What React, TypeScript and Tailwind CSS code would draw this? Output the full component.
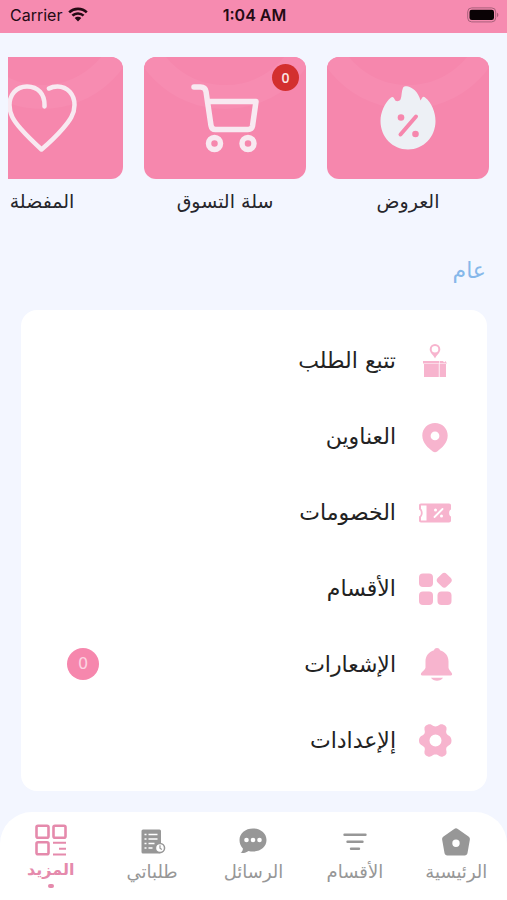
import type { ReactNode } from "react";

const ARABIC_FONT = "font-['DejaVu_Sans',sans-serif]";

function WifiIcon() {
  return (
    <svg className="h-4 w-5" viewBox="0 0 20 16" fill="currentColor">
      <path d="M10 .6C6.200.6 2.800 2 .3 4.400l1.800 1.900A11.300 11.300 0 0 1 10 3.200c3 0 5.800 1.100 7.900 3.100l1.800-1.900C17.200 2 13.800.6 10 .6z" />
      <path d="M10 5.200c-2.500 0-4.800.9-6.500 2.500l1.900 1.900A6.700 6.700 0 0 1 10 7.800c1.800 0 3.400.7 4.600 1.800l1.900-1.900A9.500 9.500 0 0 0 10 5.200z" />
      <path d="M10 9.700c-1.300 0-2.500.5-3.300 1.300L10 14.600l3.300-3.600A4.700 4.700 0 0 0 10 9.700z" />
    </svg>
  );
}

function BatteryIcon() {
  return (
    <svg className="h-4 w-8" viewBox="0 0 32 16">
      <rect x=".7" y=".9" width="28" height="14" rx="4" fill="none" stroke="#a8607a" />
      <rect x="2.500" y="2.700" width="24.500" height="10.400" rx="2.300" fill="#0a0205" />
      <path d="M30.300 5.800v4.400c1.300-.6 1.300-3.800 0-4.400z" fill="#8f4a62" />
    </svg>
  );
}

function FireIcon() {
  return (
    <svg className="h-16 w-14" viewBox="0 0 56 64">
      <path
        d="M20.500 13.500c1.500-3.500.8-8 2.500-11.800C23.800.3 25.500 0 27 .2c5.500.8 11.500 6 13.500 14.300l1.800-3c.8-1 1.900-1 2.800 0C51.500 16.500 55.500 26 55.500 35c0 16-12 28.500-27.500 28.500S.5 51 .5 35C.5 26 5 16.500 11 11.500c.9-.8 2-.7 2.700.2l1.800 3c1.500.8 3.800.6 5-1.200z"
        fill="#edf0f5"
      />
      <path d="M20.500 48.500 36 30.500" stroke="#f687ad" strokeWidth="4" strokeLinecap="round" />
      <circle cx="21" cy="31.500" r="3.300" fill="#f687ad" />
      <circle cx="35.500" cy="48" r="3.300" fill="#f687ad" />
    </svg>
  );
}

function CartIcon() {
  return (
    <svg
      className="h-[70px] w-[70px]"
      viewBox="0 0 70 70"
      fill="none"
      stroke="#f8e9f1"
      strokeWidth="5.500"
      strokeLinecap="round"
      strokeLinejoin="round"
    >
      <path d="M4 4h6.500c3.500 0 5 1.500 5.500 4.500l5 34c.5 3 2 4 4.500 4h32.500c2.500 0 4-1 4.500-3.500l3.500-24.500H17.500" />
      <circle cx="24.500" cy="60.500" r="6" />
      <circle cx="58" cy="60.500" r="6" />
    </svg>
  );
}

function HeartIcon() {
  return (
    <svg
      className="h-[70px] w-[70px]"
      viewBox="0 0 70 70"
      fill="none"
      stroke="#f8e9f1"
      strokeWidth="4.500"
      strokeLinecap="round"
      strokeLinejoin="round"
    >
      <path d="M37.500 23.500C38 11 31 3.500 20 3.500 9 3.500 2.500 12 2.500 22c0 9 4 15.500 11.500 24C20.500 53.500 28 60.500 34.500 66.500c7-6 14.500-13 21-20.500C63 37.500 67.500 31 67.500 22c0-10.500-7-18.500-17-18.500-3.500 0-6 .5-8.500 2" />
    </svg>
  );
}

function TrackIcon() {
  return (
    <svg className="h-9 w-9" viewBox="0 0 36 36" fill="#f7b4ce">
      <path
        fillRule="evenodd"
        d="M18 2a5.300 5.300 0 0 0-5.300 5.300C12.700 10.800 16 12.500 18 16.500c2-4 5.300-5.700 5.300-9.200A5.300 5.300 0 0 0 18 2zm0 2a3.300 3.300 0 1 1 0 6.600A3.300 3.300 0 0 1 18 4z"
      />
      <path d="M6 19h16v2.500H6zM7 22h14.800v13H7zM22.600 19h3.400l1.200 1.500L28.400 19l1.600 2.500h-7.400zM22.600 22H29v13h-6.400z" />
    </svg>
  );
}

function PinIcon() {
  return (
    <svg className="h-9 w-9" viewBox="0 0 36 36" fill="#f7b4ce">
      <path
        fillRule="evenodd"
        d="M18 5C11 5 5.300 10.300 5.300 17.500c0 7.500 6 12.500 10.500 16 1.500 1.100 2.900 1.100 4.400 0 4.500-3.500 10.500-8.500 10.500-16C30.700 10.300 25 5 18 5zm0 8.500a4.400 4.400 0 1 1 0 8.800 4.400 4.400 0 0 1 0-8.800z"
      />
    </svg>
  );
}

function TicketIcon() {
  return (
    <svg className="h-9 w-9" viewBox="0 0 36 36">
      <path
        d="M4 9.500h28c1.300 0 2 .7 2 2v4c-2.500.7-2.500 6.300 0 7v4c0 1.300-.7 2-2 2H4c-1.300 0-2-.7-2-2v-4c2.500-.7 2.500-6.300 0-7v-4c0-1.300.7-2 2-2z"
        fill="#f7b4ce"
      />
      <path d="M4 11.500h5.500v15H4v-3.300c2.200-2 2.200-6.400 0-8.400z" fill="#fff" />
      <path d="m17.500 23 8-8" stroke="#fff" strokeWidth="1.800" strokeLinecap="round" />
      <circle cx="18.500" cy="16" r="1.500" fill="#fff" />
      <circle cx="24.500" cy="22" r="1.500" fill="#fff" />
    </svg>
  );
}

function CategoriesIcon() {
  return (
    <svg className="h-9 w-9" viewBox="0 0 36 36" fill="#f7b4ce">
      <rect x="2" y="3.500" width="14" height="13.500" rx="4" />
      <rect x="21" y="4" width="12.500" height="12.500" rx="3.500" transform="rotate(45 27.250 10.250)" />
      <rect x="2" y="21.500" width="14" height="13.500" rx="4" />
      <rect x="20.500" y="21.500" width="14" height="13.500" rx="4" />
    </svg>
  );
}

function BellIcon() {
  return (
    <svg className="h-9 w-9" viewBox="0 0 36 36" fill="#f7b4ce">
      <path d="M20 2c1.500 0 2.600.8 3 2.200 5.500 1.600 8.500 6 8.500 11.300v6c0 2 3 4.500 3.500 6 .4 1.300-.2 2-1.300 2H5.300c-1.200 0-1.700-.8-1.300-2 .5-1.500 4.500-4 4.500-6v-6c0-5.300 3-9.700 8.500-11.300.4-1.400 1.500-2.200 3-2.200z" />
      <path d="M14 31.800h12c-1.200 2-3.500 2.900-6 2.900s-4.800-.9-6-2.900z" />
    </svg>
  );
}

function GearIcon() {
  return (
    <svg className="h-9 w-9" viewBox="0 0 36 36" fill="#f7b4ce">
      <path
        fillRule="evenodd"
        d="M12.500 2.300c2.500 0 3 2.200 6 2.200s3.500-2.200 6-2.200c2 0 4.700 1.700 5 3.500.4 2.500-1 3.500 0 5.600 1.200 2.500 5 2 5 7.100s-3.800 4.600-5 7.100c-1 2.100.4 3.100 0 5.600-.3 1.800-3 3.500-5 3.500-2.500 0-3-2.200-6-2.200s-3.500 2.200-6 2.200c-2 0-4.700-1.700-5-3.500-.4-2.500 1-3.500 0-5.600-1.200-2.500-5.500-2-5.500-7.100s4.300-4.600 5.500-7.100c1-2.100-.4-3.100 0-5.600.3-1.800 3-3.500 5-3.500zm6 10.200a6 6 0 1 0 0 12 6 6 0 0 0 0-12z"
      />
    </svg>
  );
}

function HomeIcon() {
  return (
    <svg className="h-8 w-8" viewBox="0 0 32 32" fill="#979797">
      <path
        fillRule="evenodd"
        d="M14.200 2.900c1.200-.9 2.400-.9 3.600 0l10.700 7.700c1.200.9 1.600 2 1.300 3.400l-2.300 13c-.3 1.500-1.300 2.400-2.900 2.400H7.400c-1.600 0-2.600-.9-2.900-2.400L2.200 14c-.3-1.400.1-2.500 1.300-3.400zM16 13.500a3.700 3.700 0 1 0 0 7.400 3.700 3.700 0 0 0 0-7.400z"
      />
    </svg>
  );
}

function FilterIcon() {
  return (
    <svg className="h-8 w-8" viewBox="0 0 32 32" stroke="#979797" strokeWidth="2.400" strokeLinecap="round">
      <path d="M5.500 8.800h21M8.500 15.800h15M12 22.800h8" />
    </svg>
  );
}

function ChatIcon() {
  return (
    <svg className="h-8 w-8" viewBox="0 0 32 32">
      <path
        d="M16 2.500c7.700 0 13.500 4.900 13.500 11.500S23.700 25.500 16 25.500c-1.600 0-3.100-.2-4.500-.6-2 1.600-5 2.400-8 1.900 1.700-1.200 2.500-2.800 2.400-4.300C3.800 20.300 2.500 17.300 2.500 14 2.500 7.400 8.300 2.500 16 2.500z"
        fill="#979797"
      />
      <circle cx="9.500" cy="14" r="2.300" fill="#fff" />
      <circle cx="16" cy="14" r="2.300" fill="#fff" />
      <circle cx="22.500" cy="14" r="2.300" fill="#fff" />
    </svg>
  );
}

function OrdersIcon() {
  return (
    <svg className="h-8 w-8" viewBox="0 0 32 32">
      <rect x="5.500" y="3.500" width="19.500" height="24" rx="1.500" fill="#979797" />
      <path
        d="M8.500 8.500h2M12.500 8.500h9M8.500 13h2M12.500 13h9M8.500 17.500h2M12.500 17.500h6M8.500 22h2M12.500 22h4"
        stroke="#fff"
        strokeWidth="1.400"
      />
      <circle cx="24" cy="22" r="5.300" fill="#979797" />
      <circle cx="24" cy="22" r="3.800" fill="#fff" />
      <path d="M24 19.300v3l1.800 1.300" stroke="#979797" strokeWidth="1.200" fill="none" />
    </svg>
  );
}

function MoreIcon() {
  return (
    <svg className="h-8 w-8" viewBox="0 0 32 32" fill="none" stroke="#e58aac" strokeWidth="2.600">
      <rect x="1.500" y="1.800" width="12" height="12" rx="1.500" />
      <rect x="18.500" y="1.800" width="12" height="12" rx="1.500" />
      <rect x="1.500" y="18.300" width="12" height="12" rx="1.500" />
      <path d="M18 18.800h13M24 24.800h7M18 30.500h13" strokeWidth="2" />
    </svg>
  );
}

type Shortcut = { label: string; icon: ReactNode; badge?: number };

const SHORTCUTS: Shortcut[] = [
  { label: "العروض", icon: <FireIcon /> },
  { label: "سلة التسوق", icon: <CartIcon />, badge: 0 },
  { label: "المفضلة", icon: <HeartIcon /> },
];

const MENU: Shortcut[] = [
  { label: "تتبع الطلب", icon: <TrackIcon /> },
  { label: "العناوين", icon: <PinIcon /> },
  { label: "الخصومات", icon: <TicketIcon /> },
  { label: "الأقسام", icon: <CategoriesIcon /> },
  { label: "الإشعارات", icon: <BellIcon />, badge: 0 },
  { label: "إلإعدادات", icon: <GearIcon /> },
];

const TABS = [
  { label: "الرئيسية", icon: <HomeIcon />, active: false },
  { label: "الأقسام", icon: <FilterIcon />, active: false },
  { label: "الرسائل", icon: <ChatIcon />, active: false },
  { label: "طلباتي", icon: <OrdersIcon />, active: false },
  { label: "المزيد", icon: <MoreIcon />, active: true },
];

function StatusBar() {
  return (
    <header
      dir="ltr"
      className="grid h-[33px] grid-cols-3 items-center bg-[#f68bb0] pr-2 pl-2.5 pb-1 font-[Inter,sans-serif] text-base text-[#240a14]"
    >
      <div className="flex items-center gap-1.5">
        <span>Carrier</span>
        <WifiIcon />
      </div>
      <span className="text-center font-semibold whitespace-nowrap">1:04 AM</span>
      <div className="flex justify-end">
        <BatteryIcon />
      </div>
    </header>
  );
}

function ShortcutCard({ label, icon, badge }: Shortcut) {
  return (
    <a href="#" className="flex w-[162px] shrink-0 flex-col items-center">
      <span className="relative flex h-[122px] w-full items-center justify-center overflow-hidden rounded-xl bg-[#f687ad]">
        <svg className="absolute inset-0 h-full w-full" viewBox="0 0 162 122">
          <circle cx="81" cy="-48" r="88" fill="none" stroke="#f78cb1" strokeWidth="24" />
        </svg>
        <span className="relative">{icon}</span>
        {badge !== undefined && (
          <span className="absolute top-[7px] right-[7px] flex h-[27px] w-[27px] items-center justify-center rounded-full bg-[#d32f2f] font-['Open_Sans',sans-serif] text-sm font-semibold text-[#fbe4e4]">
            {badge}
          </span>
        )}
      </span>
      <span className="mt-1.5 text-[19px] leading-8 whitespace-nowrap text-[#26262c]">{label}</span>
    </a>
  );
}

export default function App() {
  return (
    <div dir="rtl" className={`flex min-h-screen flex-col bg-[#f3f6ff] ${ARABIC_FONT}`}>
      <StatusBar />

      <main className="flex-1 pt-6 pb-[21px]">
        <section className="mr-[18px] ml-2 flex gap-[21px] overflow-hidden">
          {SHORTCUTS.map((item) => (
            <ShortcutCard key={item.label} {...item} />
          ))}
        </section>

        <h2 className="mt-9 mr-[21px] text-[22px] leading-9 text-[#86b8ea]">عام</h2>

        <ul className="mt-[21px] mr-5 ml-[21px] rounded-2xl bg-white pt-3 pb-[13px]">
          {MENU.map((item) => (
            <li key={item.label}>
              <a href="#" className="flex h-[76px] items-center pr-[34px] pl-[46px]">
                {item.icon}
                <span className="mr-[21px] text-[22px] text-[#222]">{item.label}</span>
                {item.badge !== undefined && (
                  <span className="mr-auto flex h-8 w-8 items-center justify-center rounded-full bg-[#f687ad] text-base text-[#fcd3e1]">
                    {item.badge}
                  </span>
                )}
              </a>
            </li>
          ))}
        </ul>
      </main>

      <nav className="flex h-[88px] rounded-t-[32px] bg-white pt-3">
        {TABS.map((tab) => (
          <a
            key={tab.label}
            href="#"
            className={`flex flex-1 flex-col items-center whitespace-nowrap ${
              tab.active ? "text-base leading-7 font-bold text-[#e58aac]" : "pt-0.5 text-lg leading-7 text-[#979797]"
            }`}
          >
            {tab.icon}
            <span>{tab.label}</span>
            {tab.active && <span className="h-1 w-1.5 rounded-full bg-[#e58aac]" />}
          </a>
        ))}
      </nav>
    </div>
  );
}
